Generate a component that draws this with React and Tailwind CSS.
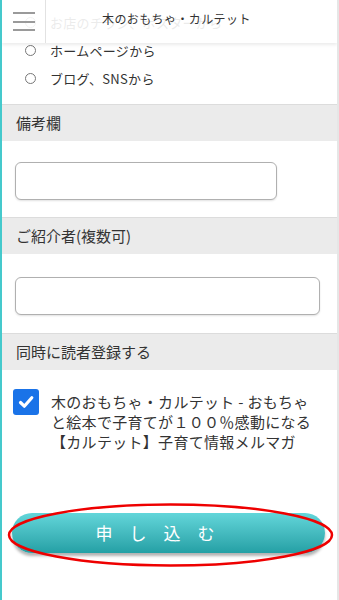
import React from "react";

const font = { fontFamily: '"Noto Sans CJK JP", "Noto Sans", sans-serif' };

function Radio({ label }) {
  return (
    <div className="flex h-7 items-center">
      <span className="ml-[23px] box-border h-[11px] w-[11px] rounded-full border border-[#777] bg-white" />
      <span className="ml-[14px] text-[13px] leading-none tracking-[0.3px] text-[#333]">{label}</span>
    </div>
  );
}

function SectionHead({ children }) {
  return (
    <div className="box-border flex h-[37px] items-center border-t border-[#dcdcdc] bg-[#ebebeb] pl-[14px] text-[15px] text-[#333]">
      {children}
    </div>
  );
}

export default function App() {
  return (
    <div
      style={font}
      className="relative box-border h-[600px] w-[339px] overflow-hidden border-l-2 border-r-2 border-l-[#45c9cc] border-r-[#e6e6e6] bg-white"
    >
      {/* fixed header overlay */}
      <div className="absolute left-0 right-0 top-0 z-10 flex h-[43px] bg-white/90 shadow-[0_2px_3px_rgba(0,0,0,0.08)]">
        <div className="flex w-[44px] flex-col items-center justify-center gap-[6.5px] border-r border-[#e2e2e2]">
          <span className="block h-[2px] w-[22px] bg-[#9a9a9a]" />
          <span className="block h-[2px] w-[22px] bg-[#9a9a9a]" />
          <span className="block h-[2px] w-[22px] bg-[#9a9a9a]" />
        </div>
        <div className="flex items-center pl-[56px] pb-[6px] text-[12px] tracking-[0.4px] text-[#333]">
          木のおもちゃ・カルテット
        </div>
      </div>

      {/* radio list */}
      <div className="pb-3 pt-2">
        <Radio label="お店のチラシ、ポスターから" />
        <Radio label="ホームページから" />
        <Radio label="ブログ、SNSから" />
      </div>

      <SectionHead>備考欄</SectionHead>
      <div className="pb-[17px] pl-[13px] pt-[21px]">
        <div className="box-border h-[38px] w-[262px] rounded-[6px] border border-[#b0b0b0] bg-white shadow-[0_1px_2px_rgba(0,0,0,0.12)]" />
      </div>

      <SectionHead>ご紹介者(複数可)</SectionHead>
      <div className="pb-[18px] pl-[13px] pt-[23px]">
        <div className="box-border h-[38px] w-[305px] rounded-[6px] border border-[#b0b0b0] bg-white shadow-[0_1px_2px_rgba(0,0,0,0.12)]" />
      </div>

      <SectionHead>同時に読者登録する</SectionHead>
      <div className="flex pl-[11px] pt-[19px]">
        <div className="flex h-[26px] w-[26px] shrink-0 items-center justify-center rounded-[3px] bg-[#1a73e8]">
          <svg width="18" height="18" viewBox="0 0 18 18">
            <path d="M3.5 9.5 L7.3 13.2 L14.8 4.8" fill="none" stroke="white" strokeWidth="3.2" strokeLinecap="round" strokeLinejoin="round" />
          </svg>
        </div>
        <div className="ml-[12px] mt-[3px] whitespace-nowrap text-[15px] leading-[20px] tracking-[0.3px] text-[#333]">
          木のおもちゃ・カルテット - おもちゃ
          <br />
          と絵本で子育てが１００％感動になる
          <br />
          【カルテット】子育て情報メルマガ
        </div>
      </div>

      {/* submit button */}
      <div className="relative ml-[10px] mt-[61px] w-[313px]">
        <button className="flex h-[40px] w-full items-center justify-center rounded-full bg-gradient-to-b from-[#62d6da] to-[#23a0a5] pr-[10px] text-[17px] tracking-[17px] text-white shadow-[0_3px_3px_rgba(0,0,0,0.3)]">
          申し込む
        </button>
        <svg
          className="pointer-events-none absolute left-[-5px] top-[-10px]"
          width="327"
          height="64"
          viewBox="0 0 327 64"
        >
          <ellipse cx="163.5" cy="32" rx="161.5" ry="30.5" fill="none" stroke="#ee0000" strokeWidth="2.5" />
        </svg>
      </div>
    </div>
  );
}
